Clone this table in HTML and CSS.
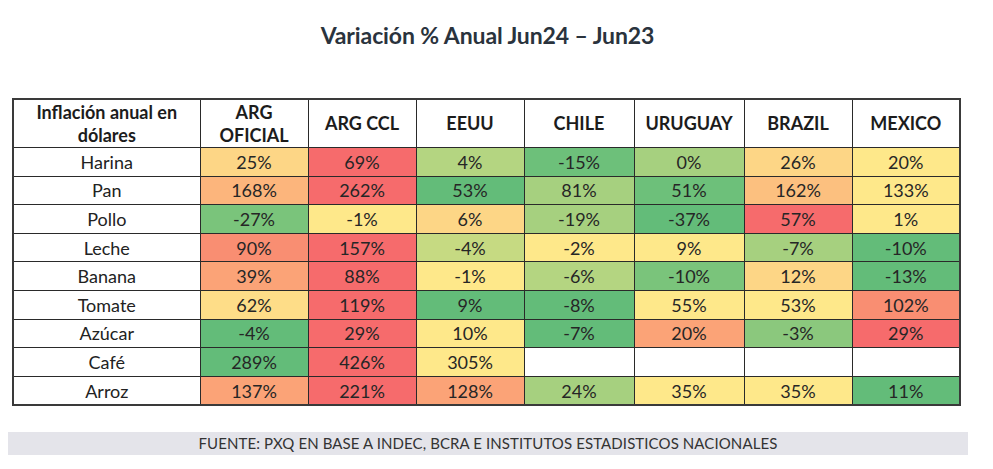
FILE: index.html
```html
<!DOCTYPE html>
<html lang="es">
<head>
<meta charset="utf-8">
<title>Variación % Anual Jun24 – Jun23</title>
<link rel="stylesheet" href="styles.css">
</head>
<body>
<div class="page">
  <h1 class="title">Variación % Anual Jun24 – Jun23</h1>
  <table class="grid">
    <colgroup>
      <col class="c-label"><col class="c-n"><col class="c-n"><col class="c-n"><col class="c-w"><col class="c-w"><col class="c-n"><col class="c-n">
    </colgroup>
    <thead>
      <tr>
        <th>Inflación anual en<br>dólares</th>
        <th>ARG<br>OFICIAL</th>
        <th>ARG CCL</th>
        <th>EEUU</th>
        <th>CHILE</th>
        <th>URUGUAY</th>
        <th>BRAZIL</th>
        <th>MEXICO</th>
      </tr>
    </thead>
    <tbody>
      <tr><td class="lbl">Harina</td><td class="yo">25%</td><td class="r">69%</td><td class="lg2">4%</td><td class="g2">-15%</td><td class="lg">0%</td><td class="yo">26%</td><td class="y">20%</td></tr>
      <tr><td class="lbl">Pan</td><td class="o2">168%</td><td class="r">262%</td><td class="g">53%</td><td class="lg">81%</td><td class="g2">51%</td><td class="o3">162%</td><td class="y">133%</td></tr>
      <tr><td class="lbl">Pollo</td><td class="g3">-27%</td><td class="y">-1%</td><td class="yo">6%</td><td class="lg">-19%</td><td class="g">-37%</td><td class="r">57%</td><td class="y">1%</td></tr>
      <tr><td class="lbl">Leche</td><td class="ro">90%</td><td class="r">157%</td><td class="yg">-4%</td><td class="y">-2%</td><td class="y">9%</td><td class="lg">-7%</td><td class="g">-10%</td></tr>
      <tr><td class="lbl">Banana</td><td class="o">39%</td><td class="r">88%</td><td class="y">-1%</td><td class="lg2">-6%</td><td class="g3">-10%</td><td class="yo">12%</td><td class="g">-13%</td></tr>
      <tr><td class="lbl">Tomate</td><td class="yo2">62%</td><td class="r">119%</td><td class="g">9%</td><td class="g">-8%</td><td class="y">55%</td><td class="y">53%</td><td class="ro">102%</td></tr>
      <tr><td class="lbl">Azúcar</td><td class="g">-4%</td><td class="r">29%</td><td class="y">10%</td><td class="g">-7%</td><td class="o">20%</td><td class="g4">-3%</td><td class="r">29%</td></tr>
      <tr><td class="lbl">Café</td><td class="g">289%</td><td class="r">426%</td><td class="y">305%</td><td></td><td></td><td></td><td></td></tr>
      <tr><td class="lbl">Arroz</td><td class="o">137%</td><td class="r">221%</td><td class="o">128%</td><td class="lg">24%</td><td class="y">35%</td><td class="y">35%</td><td class="g">11%</td></tr>
    </tbody>
  </table>
  <div class="source">FUENTE: PXQ EN BASE A INDEC, BCRA E INSTITUTOS ESTADISTICOS NACIONALES</div>
</div>
</body>
</html>
```
FILE: styles.css
```css
html, body {
  margin: 0;
  padding: 0;
  background: #ffffff;
}

.page {
  width: 993px;
  height: 469px;
  font-family: Lato, "Open Sans", "Liberation Sans", sans-serif;
  color: #262626;
  overflow: hidden;
}

.title {
  margin: 0;
  padding: 21px 18px 0 0;
  height: 76px;
  box-sizing: border-box;
  text-align: center;
  font-size: 23px;
  line-height: 29px;
  font-weight: 700;
  color: #2a333d;
  letter-spacing: -0.1px;
}

.grid {
  margin-left: 12px;
  margin-top: 22px;
  border-collapse: collapse;
  table-layout: fixed;
  width: 946px;
  border: 2px solid #3a3a3a;
}

.c-label { width: 187px; }
.c-n { width: 108px; }
.c-w { width: 110px; }

.grid th {
  height: 47px;
  padding: 0;
  font-size: 18px;
  line-height: 23px;
  font-weight: 700;
  color: #1c1c1c;
  text-align: center;
  vertical-align: middle;
  border: 1.5px solid #2a2a2a;
  background: #ffffff;
}

.grid td {
  height: 27.6px;
  padding: 0;
  font-size: 18px;
  line-height: 22px;
  text-align: center;
  vertical-align: middle;
  border: 1.5px solid #2a2a2a;
  background: #ffffff;
  color: #262626;
}

.grid td.lbl { color: #222222; }

/* colour scale */
.grid td.r   { background: #f66b6c; }
.grid td.ro  { background: #f98e72; }
.grid td.o   { background: #fba377; }
.grid td.o2  { background: #fcb57c; }
.grid td.o3  { background: #fcc07f; }
.grid td.yo  { background: #fdd686; }
.grid td.yo2 { background: #fedd88; }
.grid td.y   { background: #fee88a; }
.grid td.yg  { background: #c6da82; }
.grid td.lg2 { background: #b4d581; }
.grid td.lg  { background: #a6d07f; }
.grid td.g4  { background: #8bc87d; }
.grid td.g3  { background: #7ac47b; }
.grid td.g2  { background: #6dc07a; }
.grid td.g   { background: #63bc79; }

.source {
  margin: 26px 0 0 8px;
  width: 960px;
  height: 23px;
  background: #e4e4ea;
  text-align: center;
  font-size: 15px;
  line-height: 23px;
  color: #333333;
  letter-spacing: 0.1px;
}
```
